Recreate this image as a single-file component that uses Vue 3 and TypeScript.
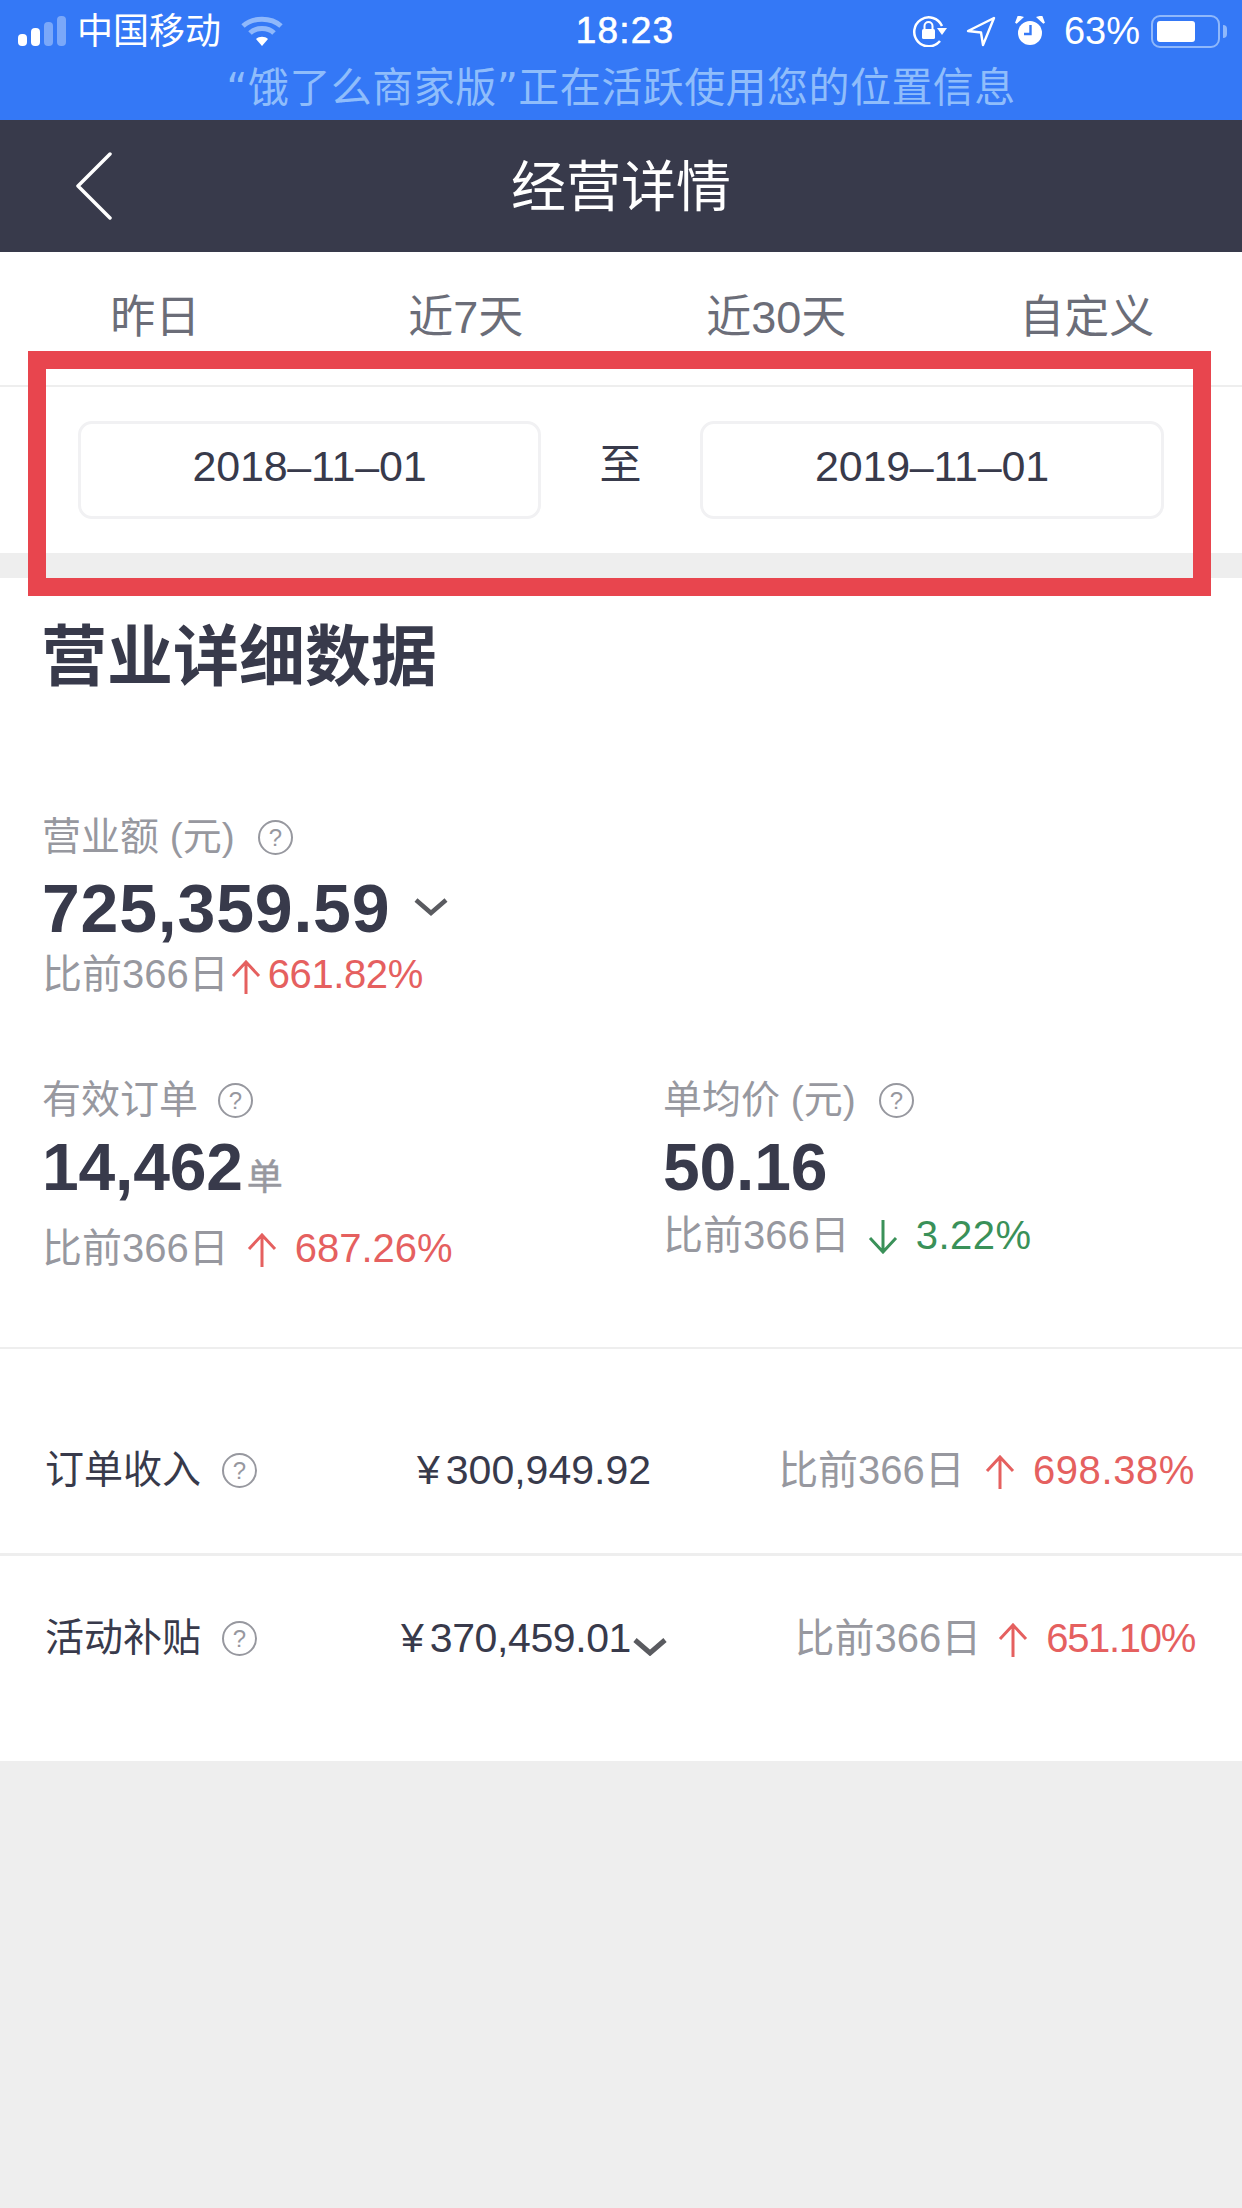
<script setup lang="ts">
interface Delta {
    text: string
    up: boolean
}

interface Metric {
    label: string
    value: string
    unit?: string
    delta: Delta
}

interface IncomeRow {
    label: string
    amount: string
    more: boolean
    delta: Delta
}

const tabs: string[] = ["昨日", "近7天", "近30天", "自定义"]

const orders: Metric = {
    label: "有效订单",
    value: "14,462",
    unit: "单",
    delta: { text: "687.26%", up: true },
}
const avgPrice: Metric = {
    label: "单均价 (元)",
    value: "50.16",
    delta: { text: "3.22%", up: false },
}

const incomeRows: IncomeRow[] = [
    { label: "订单收入", amount: "¥300,949.92", more: false, delta: { text: "698.38%", up: true } },
    { label: "活动补贴", amount: "¥370,459.01", more: true, delta: { text: "651.10%", up: true } },
]
</script>

<template>
    <div class="page">
        <div class="status">
            <div class="status-row">
                <div class="status-left">
                    <svg class="signal" width="48" height="30" viewBox="0 0 48 30">
                        <rect x="0" y="18" width="9" height="12" rx="4" fill="#fff" />
                        <rect x="13" y="12" width="9" height="18" rx="4" fill="#fff" />
                        <rect x="26" y="6" width="9" height="24" rx="4" fill="#7ba8f9" />
                        <rect x="39" y="0" width="9" height="30" rx="4" fill="#7ba8f9" />
                    </svg>
                    <span class="carrier">中国移动</span>
                    <svg class="wifi" width="42" height="30" viewBox="0 0 42 30" fill="none">
                        <path d="M2 10 C12 1 30 1 40 10" stroke="#8fb8fb" stroke-width="5" />
                        <path d="M9 17 C15 11 27 11 33 17" stroke="#8fb8fb" stroke-width="5" />
                        <path d="M15 23 C18 20 24 20 27 23 L21 30 Z" fill="#fff" />
                    </svg>
                </div>
                <span class="time">18:23</span>
                <div class="status-right">
                    <svg width="35" height="32" viewBox="0 0 35 32" fill="none">
                        <path d="M30 11 A14.5 14.5 0 1 0 28 26" stroke="#fff" stroke-width="2.5" />
                        <path d="M25 13 H35 L30 20 Z" fill="#fff" />
                        <rect x="10" y="14" width="13" height="10" rx="1.5" fill="#fff" />
                        <path d="M12.5 14 V11 A4 4 0 0 1 20.5 11 V14" stroke="#fff" stroke-width="2" />
                    </svg>
                    <svg class="loc" width="30" height="31" viewBox="0 0 30 31" fill="none">
                        <path d="M28 2 L2 15 L15 16.5 L17 29 Z" stroke="#fff" stroke-width="2.4" stroke-linejoin="round" />
                    </svg>
                    <svg class="alarm" width="30" height="31" viewBox="0 0 30 31">
                        <circle cx="15" cy="17" r="12" fill="#fff" />
                        <path d="M1 7 L7 1.5 L3.5 0.5 Z M29 7 L23 1.5 L26.5 0.5 Z" fill="#fff" stroke="#fff" stroke-width="2" />
                        <path d="M15.5 9 V18 H9" fill="none" stroke="#3478f6" stroke-width="2.4" />
                    </svg>
                    <span class="battery-text">63%</span>
                    <div class="battery">
                        <div class="battery-fill"></div>
                    </div>
                    <div class="battery-nub"></div>
                </div>
            </div>
            <div class="location-tip">“饿了么商家版”正在活跃使用您的位置信息</div>
        </div>

        <div class="header">
            <svg class="back" width="38" height="68" viewBox="0 0 38 68" fill="none">
                <path d="M35 2 L3 34 L35 66" stroke="#fff" stroke-width="3.5" stroke-linecap="round" stroke-linejoin="round" />
            </svg>
            <h1 class="header-title">经营详情</h1>
        </div>

        <div class="tabs">
            <div v-for="tab in tabs" :key="tab" class="tab">{{ tab }}</div>
        </div>

        <div class="range">
            <div class="date-box">2018–11–01</div>
            <span class="range-to">至</span>
            <div class="date-box">2019–11–01</div>
        </div>
        <div class="band"></div>

        <div class="detail">
            <h2 class="detail-title">营业详细数据</h2>

            <div class="metric metric-main">
                <div class="metric-label">营业额 (元)<span class="help help-close">?</span></div>
                <div class="metric-value">
                    725,359.59
                    <svg class="value-more" width="34" height="19" viewBox="0 0 34 19" fill="none">
                        <path d="M2 3 L17 16 L32 3" stroke="#5a5b60" stroke-width="4.5" />
                    </svg>
                </div>
                <div class="delta delta-tight">
                    <span class="delta-prefix">比前366日</span>
                    <svg class="arrow" width="30" height="34" viewBox="0 0 30 34" fill="none">
                        <path d="M15 34 V2 M2 16 L15 2 L28 16" stroke="#e5605f" stroke-width="3" />
                    </svg>
                    <span class="delta-up">661.82%</span>
                </div>
            </div>

            <div class="metric-pair">
                <div class="metric">
                    <div class="metric-label">{{ orders.label }}<span class="help">?</span></div>
                    <div class="metric-value">{{ orders.value }}<span class="metric-unit">{{ orders.unit }}</span></div>
                    <div class="delta delta-low">
                        <span class="delta-prefix">比前366日</span>
                        <svg class="arrow" width="30" height="34" viewBox="0 0 30 34" fill="none">
                            <path d="M15 34 V2 M2 16 L15 2 L28 16" stroke="#e5605f" stroke-width="3" />
                        </svg>
                        <span class="delta-up">{{ orders.delta.text }}</span>
                    </div>
                </div>
                <div class="metric">
                    <div class="metric-label">{{ avgPrice.label }}<span class="help help-close">?</span></div>
                    <div class="metric-value">{{ avgPrice.value }}</div>
                    <div class="delta">
                        <span class="delta-prefix">比前366日</span>
                        <svg class="arrow" width="30" height="34" viewBox="0 0 30 34" fill="none">
                            <path d="M15 0 V32 M2 18 L15 32 L28 18" stroke="#3a9159" stroke-width="3" />
                        </svg>
                        <span class="delta-down">{{ avgPrice.delta.text }}</span>
                    </div>
                </div>
            </div>
        </div>

        <div class="income">
            <div v-for="row in incomeRows" :key="row.label" class="income-row">
                <div class="income-label">{{ row.label }}<span class="help">?</span></div>
                <div class="income-amount">
                    <span class="yen">¥</span><span class="amount-num">{{ row.amount.slice(1) }}</span><svg v-if="row.more" class="amount-more" width="34" height="19" viewBox="0 0 34 19" fill="none">
                        <path d="M2 3 L17 16 L32 3" stroke="#5a5b60" stroke-width="5" />
                    </svg>
                </div>
                <div class="delta income-delta">
                    <span class="delta-prefix">比前366日</span>
                    <svg class="arrow" width="30" height="34" viewBox="0 0 30 34" fill="none">
                        <path d="M15 34 V2 M2 16 L15 2 L28 16" stroke="#e5605f" stroke-width="3" />
                    </svg>
                    <span class="delta-up">{{ row.delta.text }}</span>
                </div>
            </div>
        </div>

        <!-- annotation drawn over the screenshot -->
        <div class="highlight"></div>
    </div>
</template>

<style scoped>
.page {
    position: relative;
    width: 1242px;
    height: 2208px;
    overflow: hidden;
    background-color: #eeeeee;
    font-family: "Liberation Sans", "Noto Sans CJK SC", sans-serif;
    color: #383a4b;
}

.status {
    height: 120px;
    background-color: #3478f6;
    color: #fff;
}
.status-row {
    height: 62px;
    padding: 0 15px 0 18px;
    display: grid;
    grid-template-columns: 1fr auto 1fr;
    align-items: center;
}
.status-left {
    display: flex;
    align-items: center;
}
.carrier {
    margin-left: 11px;
    padding-top: 2px;
    font-size: 36px;
    line-height: 40px;
}
.wifi {
    margin-left: 20px;
}
.time {
    margin-left: 5px;
    font-size: 37px;
    font-weight: 500;
    letter-spacing: 1.2px;
    -webkit-text-stroke: 0.6px #fff;
}
.status-right {
    display: flex;
    align-items: center;
    justify-content: flex-end;
}
.loc {
    margin-left: 19px;
}
.alarm {
    margin-left: 19px;
}
.battery-text {
    margin-left: 19px;
    font-size: 38px;
}
.battery {
    margin-left: 11px;
    width: 69px;
    height: 33px;
    box-sizing: border-box;
    padding: 4px;
    border: 2px solid #8fb8fb;
    border-radius: 9px;
}
.battery-fill {
    width: 38px;
    height: 100%;
    background-color: #fff;
    border-radius: 3px;
}
.battery-nub {
    margin-left: 3px;
    width: 4px;
    height: 13px;
    background-color: #8fb8fb;
    border-radius: 0 4px 4px 0;
}
.location-tip {
    margin-top: 4px;
    text-align: center;
    font-family: "DejaVu Sans", "Noto Sans CJK SC", sans-serif;
    font-size: 41px;
    letter-spacing: 0.45px;
    line-height: 44px;
    color: #8fbdfb;
}

.header {
    position: relative;
    height: 132px;
    box-sizing: border-box;
    padding-bottom: 8px;
    background-color: #383a4b;
    display: flex;
    align-items: center;
    justify-content: center;
}
.back {
    position: absolute;
    left: 75px;
    top: 32px;
}
.header-title {
    margin: 0;
    font-size: 55px;
    font-weight: 400;
    color: #fff;
}

.tabs {
    height: 135px;
    box-sizing: border-box;
    padding-top: 41px;
    display: grid;
    grid-template-columns: repeat(4, 1fr);
    background-color: #fff;
    border-bottom: 2px solid #eeeeee;
}
.tab {
    text-align: center;
    font-size: 45px;
    line-height: 50px;
    color: #6b6d78;
}

.range {
    height: 166px;
    box-sizing: border-box;
    padding: 34px 78px 0;
    background-color: #fff;
    display: grid;
    grid-template-columns: 463px 1fr 464px;
    align-items: start;
}
.date-box {
    height: 98px;
    box-sizing: border-box;
    border: 3px solid #f1f1f3;
    border-radius: 14px;
    text-align: center;
    font-size: 43px;
    letter-spacing: -0.2px;
    line-height: 84px;
}
.range-to {
    text-align: center;
    font-size: 42px;
    line-height: 88px;
}
.band {
    height: 25px;
}

.detail {
    height: 771px;
    box-sizing: border-box;
    padding: 41px 0 0 42px;
    background-color: #fff;
    border-bottom: 2px solid #eeeeee;
}
.detail-title {
    margin: 0 0 0 -1px;
    font-size: 66px;
    line-height: 76px;
    font-weight: 700;
}

.metric-main {
    margin-top: 120px;
}
.metric-pair {
    margin-top: 82px;
    display: grid;
    grid-template-columns: 621px 1fr;
}
.metric-label {
    display: flex;
    align-items: center;
    font-size: 39px;
    line-height: 44px;
    color: #97989f;
}
.metric-value {
    display: flex;
    align-items: baseline;
    margin-top: 7px;
    font-size: 66px;
    letter-spacing: -0.2px;
    line-height: 76px;
    font-weight: 700;
}
.metric-main .metric-value {
    margin-top: 11px;
    font-size: 68px;
    letter-spacing: 0.8px;
}
.value-more {
    margin-left: 24px;
    margin-bottom: 3px;
    align-self: center;
}
.metric-unit {
    margin-left: 4px;
    font-size: 36px;
    font-weight: 400;
    line-height: 1;
    letter-spacing: 0;
    color: #97989f;
    -webkit-text-stroke: 0.5px #97989f;
}

.help {
    box-sizing: border-box;
    flex: none;
    width: 35px;
    height: 35px;
    margin-left: 20px;
    border: 2px solid #97989f;
    border-radius: 50%;
    text-align: center;
    font-size: 24px;
    line-height: 31px;
    color: #97989f;
}
.help-close {
    margin-left: 23px;
}

.delta {
    display: flex;
    align-items: center;
    margin-top: 8px;
    font-size: 40px;
    line-height: 44px;
}
.delta-tight {
    margin-top: 6px;
}
.delta-tight .arrow {
    margin: 6px 7px 0 2px;
}
.delta-tight .delta-up {
    letter-spacing: -0.4px;
}
.delta-low {
    margin-top: 21px;
}
.arrow {
    flex: none;
    margin: 4px 18px 0 18px;
}
.delta-prefix {
    color: #97989f;
}
.delta-up {
    color: #e5605f;
}
.delta-down {
    color: #3a9159;
    letter-spacing: 0.5px;
}

.income {
    height: 412px;
    background-color: #fff;
}
.income-row {
    display: grid;
    grid-template-columns: 300px 378px 1fr;
    align-items: center;
    padding: 0 47px 0 45px;
    box-sizing: border-box;
    font-size: 39px;
    line-height: 44px;
}
.income-row:first-child {
    height: 207px;
    padding-top: 38px;
    border-bottom: 3px solid #eeeeee;
}
.income-row:last-child {
    height: 205px;
    padding-bottom: 41px;
}
.income-row:first-child .delta-up {
    letter-spacing: 0.6px;
}
.income-row:last-child .delta-up {
    letter-spacing: -1.3px;
}
.income-row:last-child .amount-num {
    letter-spacing: -0.4px;
}
.income-label {
    display: flex;
    align-items: center;
}
.income-label .help {
    margin-left: 21px;
}
.income-amount {
    position: relative;
    text-align: center;
    font-size: 41px;
}
.yen {
    margin-right: 6px;
}
.amount-more {
    vertical-align: -4px;
    margin-left: 2px;
}
.income-delta {
    margin-top: 0;
    justify-content: flex-end;
}
.income-delta .arrow {
    margin: 4px 18px 0 20px;
}
.income-row:last-child .income-delta .arrow {
    margin-left: 17px;
}

.highlight {
    position: absolute;
    left: 28px;
    top: 351px;
    width: 1183px;
    height: 245px;
    box-sizing: border-box;
    border: 18px solid #e8454e;
}
</style>
